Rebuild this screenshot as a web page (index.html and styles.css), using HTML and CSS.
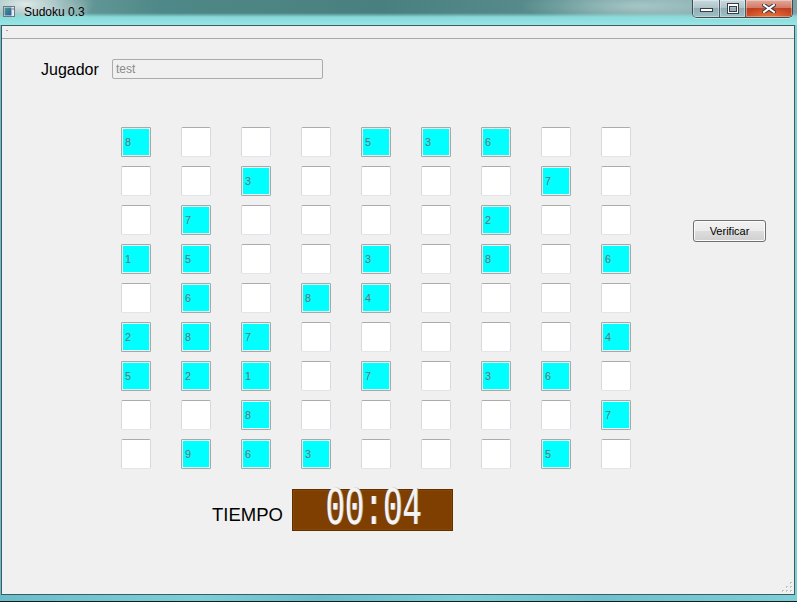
FILE: index.html
```html
<!DOCTYPE html>
<html lang="es">
<head>
<meta charset="utf-8">
<title>Sudoku 0.3</title>
<link rel="stylesheet" href="styles.css">
</head>
<body>
<div class="window">
  <div class="titlebar">
    <svg class="app-icon" width="12" height="11" viewBox="0 0 12 11">
      <defs>
        <linearGradient id="ig" x1="0" y1="0" x2="1" y2="1">
          <stop offset="0" stop-color="#4a9a8a"/>
          <stop offset="1" stop-color="#2a5aa0"/>
        </linearGradient>
      </defs>
      <rect x="0.5" y="0.5" width="11" height="10" fill="#e8eef0" stroke="#6a7a84"/>
      <rect x="1.5" y="1.5" width="7" height="8" fill="url(#ig)"/>
      <rect x="9.5" y="2" width="1" height="2" fill="#6a7a84"/>
    </svg>
    <span class="title">Sudoku 0.3</span>
    <div class="caption-buttons">
      <div class="cbtn min"><span class="min-bar"></span></div>
      <div class="cbtn max"><span class="max-box"></span></div>
      <div class="cbtn close">
        <svg width="14" height="9" viewBox="0 0 14 9">
          <path d="M2 1 L12 8 M12 1 L2 8" stroke="#3b3b45" stroke-width="4" stroke-linecap="square"/>
          <path d="M2 1 L12 8 M12 1 L2 8" stroke="#ffffff" stroke-width="2" stroke-linecap="square"/>
        </svg>
      </div>
    </div>
  </div>
  <div class="client">
    <div class="menubar"><span class="menu-dot"></span></div>
    <div class="content">
      <div class="player-row">
        <span class="player-label">Jugador</span>
        <input class="player-input" type="text" value="test" disabled>
      </div>
      <div class="board-row">
        <div class="board">
          <div class="cell given">8</div><div class="cell"></div><div class="cell"></div><div class="cell"></div><div class="cell given">5</div><div class="cell given">3</div><div class="cell given">6</div><div class="cell"></div><div class="cell"></div>
          <div class="cell"></div><div class="cell"></div><div class="cell given">3</div><div class="cell"></div><div class="cell"></div><div class="cell"></div><div class="cell"></div><div class="cell given">7</div><div class="cell"></div>
          <div class="cell"></div><div class="cell given">7</div><div class="cell"></div><div class="cell"></div><div class="cell"></div><div class="cell"></div><div class="cell given">2</div><div class="cell"></div><div class="cell"></div>
          <div class="cell given">1</div><div class="cell given">5</div><div class="cell"></div><div class="cell"></div><div class="cell given">3</div><div class="cell"></div><div class="cell given">8</div><div class="cell"></div><div class="cell given">6</div>
          <div class="cell"></div><div class="cell given">6</div><div class="cell"></div><div class="cell given">8</div><div class="cell given">4</div><div class="cell"></div><div class="cell"></div><div class="cell"></div><div class="cell"></div>
          <div class="cell given">2</div><div class="cell given">8</div><div class="cell given">7</div><div class="cell"></div><div class="cell"></div><div class="cell"></div><div class="cell"></div><div class="cell"></div><div class="cell given">4</div>
          <div class="cell given">5</div><div class="cell given">2</div><div class="cell given">1</div><div class="cell"></div><div class="cell given">7</div><div class="cell"></div><div class="cell given">3</div><div class="cell given">6</div><div class="cell"></div>
          <div class="cell"></div><div class="cell"></div><div class="cell given">8</div><div class="cell"></div><div class="cell"></div><div class="cell"></div><div class="cell"></div><div class="cell"></div><div class="cell given">7</div>
          <div class="cell"></div><div class="cell given">9</div><div class="cell given">6</div><div class="cell given">3</div><div class="cell"></div><div class="cell"></div><div class="cell"></div><div class="cell given">5</div><div class="cell"></div>
        </div>
        <button class="verify-btn" type="button">Verificar</button>
      </div>
      <div class="timer-row">
        <span class="timer-label">TIEMPO</span>
        <div class="lcd"><span class="lcd-digits">00:04</span></div>
      </div>
    </div>
    <svg class="size-grip" width="10" height="10" viewBox="0 0 10 10">
      <g fill="#c4c4c4">
        <rect x="8" y="0" width="2" height="2"/>
        <rect x="4" y="4" width="2" height="2"/><rect x="8" y="4" width="2" height="2"/>
        <rect x="0" y="8" width="2" height="2"/><rect x="4" y="8" width="2" height="2"/><rect x="8" y="8" width="2" height="2"/>
      </g>
      <g fill="#ffffff">
        <rect x="9" y="1" width="1" height="1"/>
        <rect x="5" y="5" width="1" height="1"/><rect x="9" y="5" width="1" height="1"/>
        <rect x="1" y="9" width="1" height="1"/><rect x="5" y="9" width="1" height="1"/><rect x="9" y="9" width="1" height="1"/>
      </g>
    </svg>
  </div>
</div>
</body>
</html>
```
FILE: styles.css
```css
html, body {
  margin: 0;
  padding: 0;
  overflow: hidden;
}

body {
  font-family: "Liberation Sans", Arial, sans-serif;
  background: #000;
}

.window {
  width: 797px;
  height: 602px;
  box-sizing: border-box;
  display: flex;
  flex-direction: column;
  border-bottom: 1px solid #1a1a1a;
  background:
    linear-gradient(to right, rgba(90,170,190,0.5) 0, rgba(120,210,215,0) 200px, rgba(80,160,185,0.4) 320px, rgba(120,210,215,0) 460px, rgba(90,170,190,0.4) 600px, rgba(120,210,215,0) 797px),
    #7ccfd6;
}

/* ---------- title bar ---------- */
.titlebar {
  height: 25px;
  flex-shrink: 0;
  display: flex;
  align-items: flex-start;
  background:
    linear-gradient(to bottom, rgba(150,228,228,0) 0, rgba(150,228,228,0) 13px, rgba(140,222,222,0.95) 17px, rgba(152,230,230,1) 25px),
    radial-gradient(ellipse 70px 22px at 25px 4px, rgba(228,236,236,0.95), rgba(228,236,236,0)),
    radial-gradient(ellipse 120px 18px at 640px 6px, rgba(175,205,205,0.85), rgba(175,205,205,0)),
    linear-gradient(to right, #7aa8a8 0, #4f8888 160px, #4a7f7f 380px, #5a8e8e 560px, #7ea6a6 680px, #7aa2a2 797px);
}

.app-icon {
  margin: 6px 0 0 3px;
  flex-shrink: 0;
}

.title {
  margin: 5px 0 0 9px;
  font-size: 12px;
  line-height: 14px;
  color: #000;
  text-shadow: 0 0 6px rgba(255,255,255,0.7);
}

.caption-buttons {
  margin-left: auto;
  margin-right: 4px;
  height: 17px;
  display: flex;
  border: 1px solid #3e4c52;
  border-top: none;
  border-radius: 0 0 5px 5px;
  overflow: hidden;
  box-shadow: 0 1px 0 rgba(255,255,255,0.4);
}

.cbtn {
  height: 17px;
  display: flex;
  align-items: center;
  justify-content: center;
  box-shadow: inset 0 0 0 1px rgba(255,255,255,0.35);
}

.min, .max {
  background: linear-gradient(to bottom, #c9dadf 0, #adc4ca 45%, #91aeb6 50%, #9cc0c6 100%);
  border-right: 1px solid #4a5a60;
}

.min {
  width: 27px;
  align-items: flex-end;
  padding-bottom: 5px;
  box-sizing: border-box;
}

.max {
  width: 25px;
}

.close {
  width: 46px;
  background:
    radial-gradient(ellipse 26px 10px at 50% 100%, rgba(240,120,60,0.9), rgba(240,120,60,0)),
    linear-gradient(to bottom, #e3a99b 0, #d27c66 45%, #c0401f 50%, #c64a26 100%);
}

.min-bar {
  display: block;
  width: 11px;
  height: 2px;
  background: #fff;
  border: 1px solid #3b3b45;
}

.max-box {
  display: block;
  width: 8px;
  height: 6px;
  border: 1px solid #fff;
  border-top-width: 2px;
  outline: 1px solid #3b3b45;
  box-shadow: inset 0 0 0 1px #3b3b45;
  margin-top: -1px;
}

/* ---------- client area ---------- */
.client {
  flex: 1;
  margin: 0 2px 6px 1px;
  border: 1px solid #3d5b60;
  background: #f0f0f0;
  display: flex;
  flex-direction: column;
  position: relative;
}

.menubar {
  height: 12px;
  border-bottom: 1px solid #a8a8a8;
  flex-shrink: 0;
}

.menu-dot {
  display: block;
  width: 2px;
  height: 1px;
  background: #a0a0a0;
  margin: 4px 0 0 4px;
}

.content {
  padding: 20px 0 0 39px;
}

.player-row {
  display: flex;
  align-items: center;
  height: 20px;
}

.player-label {
  width: 71px;
  font-size: 16px;
  color: #000;
  padding-top: 1px;
}

.player-input {
  width: 211px;
  height: 20px;
  box-sizing: border-box;
  margin: 0;
  padding: 0 0 0 3px;
  border: 1px solid #ababab;
  border-radius: 2px;
  background: #f0f0f0;
  font-family: "Liberation Sans", Arial, sans-serif;
  font-size: 12px;
  color: #8a8a8a;
}

.board-row {
  display: flex;
  align-items: flex-start;
  margin: 48px 0 0 80px;
}

.board {
  display: grid;
  grid-template-columns: repeat(9, 30px);
  grid-auto-rows: 30px;
  column-gap: 30px;
  row-gap: 9px;
}

.cell {
  box-sizing: border-box;
  width: 30px;
  height: 30px;
  background: #fff;
  border: 1px solid;
  border-color: #ababab #d8d9df #e3e4ea #d8d9df;
  border-radius: 2px;
  font-size: 11px;
  line-height: 28px;
  padding-left: 3px;
  color: #687474;
}

.cell.given {
  background: #00ffff;
  border-color: #a2abab;
  border-radius: 1px;
  box-shadow: inset 0 0 0 1px #e6f6f6;
}

.verify-btn {
  margin: 93px 0 0 62px;
  width: 73px;
  height: 22px;
  padding: 0;
  border: 1px solid #707070;
  border-radius: 3px;
  background: linear-gradient(to bottom, #f2f2f2 0, #ebebeb 50%, #dddddd 50%, #cfcfcf 100%);
  box-shadow: inset 0 0 0 1px #fbfbfb;
  font-family: "Liberation Sans", Arial, sans-serif;
  font-size: 11px;
  color: #000;
}

.timer-row {
  display: flex;
  align-items: flex-end;
  margin: 20px 0 0 171px;
}

.timer-label {
  width: 80px;
  font-size: 18.5px;
  line-height: 18.5px;
  margin-bottom: 7px;
  color: #000;
}

.lcd {
  width: 161px;
  height: 42px;
  box-sizing: border-box;
  background: #7f3f00;
  border: 1px solid #5e2f00;
  box-shadow: inset 0 0 0 1px #8a4808;
  display: flex;
  align-items: center;
  justify-content: center;
}

.lcd-digits {
  display: block;
  font-family: "Liberation Mono", "Courier New", monospace;
  font-size: 32px;
  line-height: 22px;
  height: 22px;
  color: #f4f4f4;
  text-shadow: 1px 0 0 #b0b0b0;
  transform: scaleY(1.7);
  margin-left: 2px;
}

.size-grip {
  position: absolute;
  right: 2px;
  bottom: 2px;
}
```
